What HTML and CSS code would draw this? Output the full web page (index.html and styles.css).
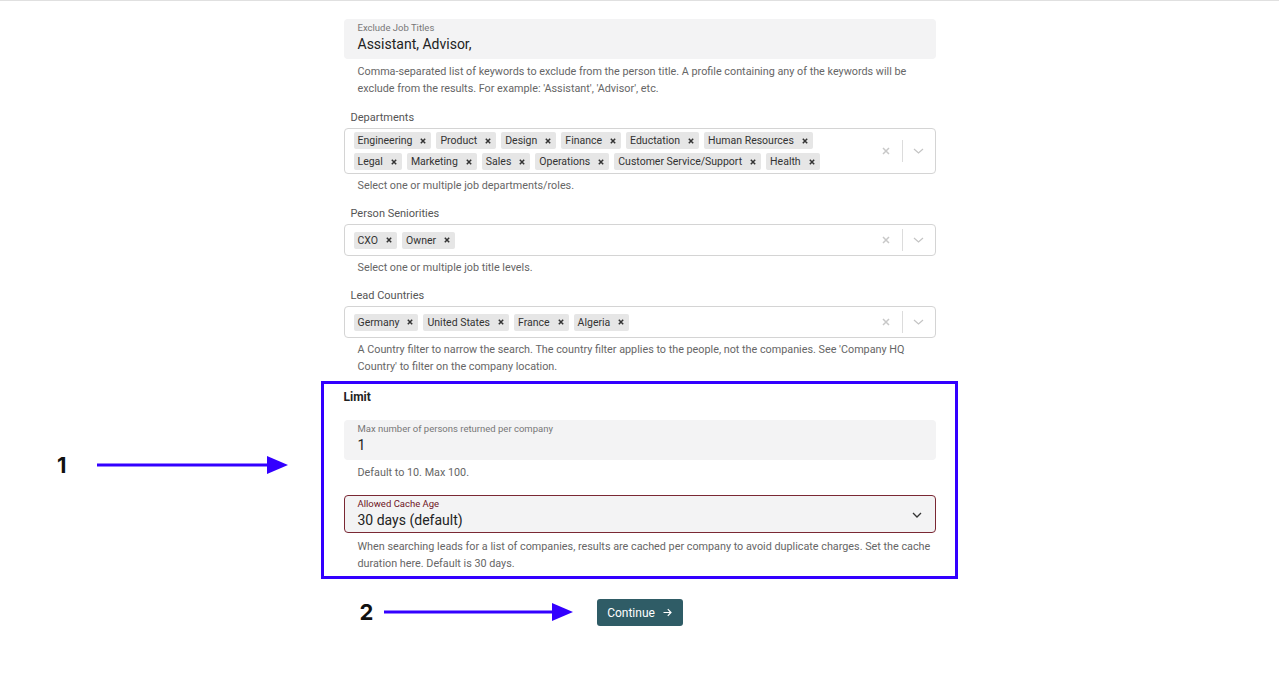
FILE: index.html
```html
<!DOCTYPE html>
<html lang="en">
<head>
  <meta charset="UTF-8" />
  <title>Lead search settings</title>
  <link rel="stylesheet" href="styles.css">
</head>
<body>
  <div class="page">
    <form class="form">
      <div class="filled first">
        <span class="filled-label">Exclude Job Titles</span>
        <span class="filled-value">Assistant, Advisor,</span>
      </div>
      <div class="helper">Comma-separated list of keywords to exclude from the person title. A profile containing any of the keywords will be exclude from the results. For example: 'Assistant', 'Advisor', etc.</div>

      <div class="field">
        <div class="field-label">Departments</div>
        <div class="select" data-list="departments"></div>
        <div class="helper">Select one or multiple job departments/roles.</div>
      </div>

      <div class="field">
        <div class="field-label">Person Seniorities</div>
        <div class="select" data-list="seniorities"></div>
        <div class="helper">Select one or multiple job title levels.</div>
      </div>

      <div class="field">
        <div class="field-label">Lead Countries</div>
        <div class="select" data-list="countries"></div>
        <div class="helper">A Country filter to narrow the search. The country filter applies to the people, not the companies. See 'Company HQ Country' to filter on the company location.</div>
      </div>

      <section class="limit">
        <h3>Limit</h3>
        <div class="filled">
          <span class="filled-label">Max number of persons returned per company</span>
          <span class="filled-value">1</span>
        </div>
        <div class="helper">Default to 10. Max 100.</div>

        <div class="filled dropdown">
          <span class="filled-label">Allowed Cache Age</span>
          <span class="filled-value">30 days (default)</span>
          <svg class="dropdown-chev" width="10" height="6" viewBox="0 0 10 6"><polyline points="1,1 5,5 9,1" fill="none" stroke="#333" stroke-width="1.3"/></svg>
        </div>
        <div class="helper">When searching leads for a list of companies, results are cached per company to avoid duplicate charges. Set the cache duration here. Default is 30 days.</div>
      </section>

      <div class="actions">
        <button type="button" class="continue">Continue
          <svg class="arrow" width="9" height="9" viewBox="0 0 9 9"><path d="M0.5 4.5H8M4.8 1.2L8 4.5L4.8 7.8" fill="none" stroke="#fff" stroke-width="1.2"/></svg>
        </button>
        <div class="note note-two">
          <span class="note-num">2</span>
          <svg width="190" height="20" viewBox="0 0 190 20"><line x1="0" y1="10" x2="172" y2="10" stroke="#3300ff" stroke-width="3"/><polygon points="168,1 189,10 168,19" fill="#3300ff"/></svg>
        </div>
      </div>
    </form>

    <div class="note note-one">
      <span class="note-num">1</span>
      <svg width="192" height="20" viewBox="0 0 192 20"><line x1="0" y1="10" x2="174" y2="10" stroke="#3300ff" stroke-width="3"/><polygon points="170,1 191,10 170,19" fill="#3300ff"/></svg>
    </div>
  </div>

  <script>
    const lists = {
      departments: ["Engineering", "Product", "Design", "Finance", "Eductation", "Human Resources", "Legal", "Marketing", "Sales", "Operations", "Customer Service/Support", "Health"],
      seniorities: ["CXO", "Owner"],
      countries: ["Germany", "United States", "France", "Algeria"]
    };

    const xIcon = '<svg width="6" height="6" viewBox="0 0 6 6"><path d="M0.8 0.8L5.2 5.2M5.2 0.8L0.8 5.2" stroke="#333" stroke-width="1.5"/></svg>';

    document.querySelectorAll('.select').forEach(box => {
      const values = document.createElement('div');
      values.className = 'values';
      lists[box.dataset.list].forEach(name => {
        const chip = document.createElement('span');
        chip.className = 'chip';
        chip.innerHTML = `<span class="chip-text">${name}</span><span class="chip-x">${xIcon}</span>`;
        values.appendChild(chip);
      });
      box.appendChild(values);

      const ind = document.createElement('div');
      ind.className = 'indicators';
      ind.innerHTML = `
        <svg class="clear" width="8" height="8" viewBox="0 0 8 8"><path d="M1 1L7 7M7 1L1 7" stroke="#c8c8c8" stroke-width="1.5"/></svg>
        <span class="sep"></span>
        <svg class="chev" width="11" height="6" viewBox="0 0 11 6"><polyline points="1,1 5.5,5 10,1" fill="none" stroke="#c4c4c4" stroke-width="1.2"/></svg>`;
      box.appendChild(ind);
    });
  </script>
</body>
</html>
```

FILE: styles.css
```css
body {
  margin: 0;
  font-family: Roboto, "Liberation Sans", sans-serif;
  color: #333;
  background: #fff;
}

.page {
  position: relative;
  height: 700px;
  overflow: hidden;
  border-top: 1px solid #e0e0e0;
  box-sizing: border-box;
}

.form {
  width: 592px;
  margin: 0 auto;
  display: flex;
  flex-direction: column;
}

.helper {
  font-size: 10.8px;
  line-height: 17px;
  color: #666;
  padding: 3px 0 0 14px;
}

.filled + .helper {
  padding-top: 4px;
}

.filled.dropdown + .helper {
  padding-top: 5px;
}

.filled {
  position: relative;
  background: #f3f3f4;
  border-radius: 4px;
  height: 40px;
  box-sizing: border-box;
  padding: 3px 14px 0 14px;
  display: flex;
  flex-direction: column;
}

.filled.first {
  margin-top: 18px;
}

.filled-label {
  font-size: 9.5px;
  line-height: 12px;
  color: #777;
}

.filled-value {
  font-size: 14px;
  line-height: 20px;
  color: #222;
}

.field {
  margin-top: 13px;
}

.helper + .field {
  margin-top: 14px;
}

.field + .field {
  margin-top: 13px;
}

.field:last-of-type {
  margin-top: 14px;
}

.field-label {
  font-size: 11px;
  line-height: 14px;
  color: #555;
  padding-left: 7px;
  margin-bottom: 3px;
}

.select {
  display: flex;
  align-items: center;
  min-height: 32px;
  box-sizing: border-box;
  border: 1px solid #d4d4d4;
  border-radius: 4px;
  padding: 3px 0 3px 9px;
}

.values {
  flex: 1;
  display: flex;
  flex-wrap: wrap;
  gap: 4px 5px;
  padding-right: 40px;
}

.chip {
  display: inline-flex;
  align-items: center;
  height: 17px;
  background: #e6e6e6;
  border-radius: 2px;
  font-size: 10.5px;
  color: #333;
  padding-left: 4px;
}

.chip-x {
  display: inline-flex;
  margin: 0 5px 0 8px;
}

.indicators {
  display: flex;
  align-items: center;
  align-self: stretch;
}

.clear {
  margin-right: 12px;
}

.sep {
  width: 1px;
  height: 22px;
  background: #dcdcdc;
  align-self: center;
}

.chev {
  margin: 0 11px 0 10px;
}

.limit {
  margin: 6px -22px 0 -23px;
  border: 3px solid #3300ff;
  padding: 5px 19px 4px 20px;
  display: flex;
  flex-direction: column;
}

.limit h3 {
  margin: 0 0 15px 0;
  font-size: 12px;
  line-height: 16px;
  font-weight: 700;
  color: #222;
}

.filled.dropdown {
  margin-top: 14px;
  height: 38px;
  border: 1px solid #7a2834;
  padding: 2px 13px 0 13px;
}

.filled.dropdown .filled-label {
  color: #6e1424;
}

.dropdown-chev {
  position: absolute;
  right: 13px;
  top: 16px;
}

.actions {
  position: relative;
  display: flex;
  justify-content: center;
  margin-top: 20px;
}

.continue {
  display: inline-flex;
  align-items: center;
  justify-content: center;
  height: 27px;
  width: 86px;
  border: none;
  border-radius: 3px;
  background: #2f5c66;
  color: #fff;
  font-family: Roboto, "Liberation Sans", sans-serif;
  font-size: 12px;
  padding: 0;
}

.continue .arrow {
  margin-left: 8px;
}

.note {
  position: absolute;
  display: flex;
  align-items: center;
  gap: 10px;
}

.note-num {
  font-family: Inter, "Liberation Sans", sans-serif;
  font-weight: 700;
  font-size: 22px;
  color: #111;
}

.note-one {
  left: 57px;
  top: 451px;
  gap: 30px;
}

.note-two {
  left: 16px;
  top: 0;
  gap: 11px;
}
```
